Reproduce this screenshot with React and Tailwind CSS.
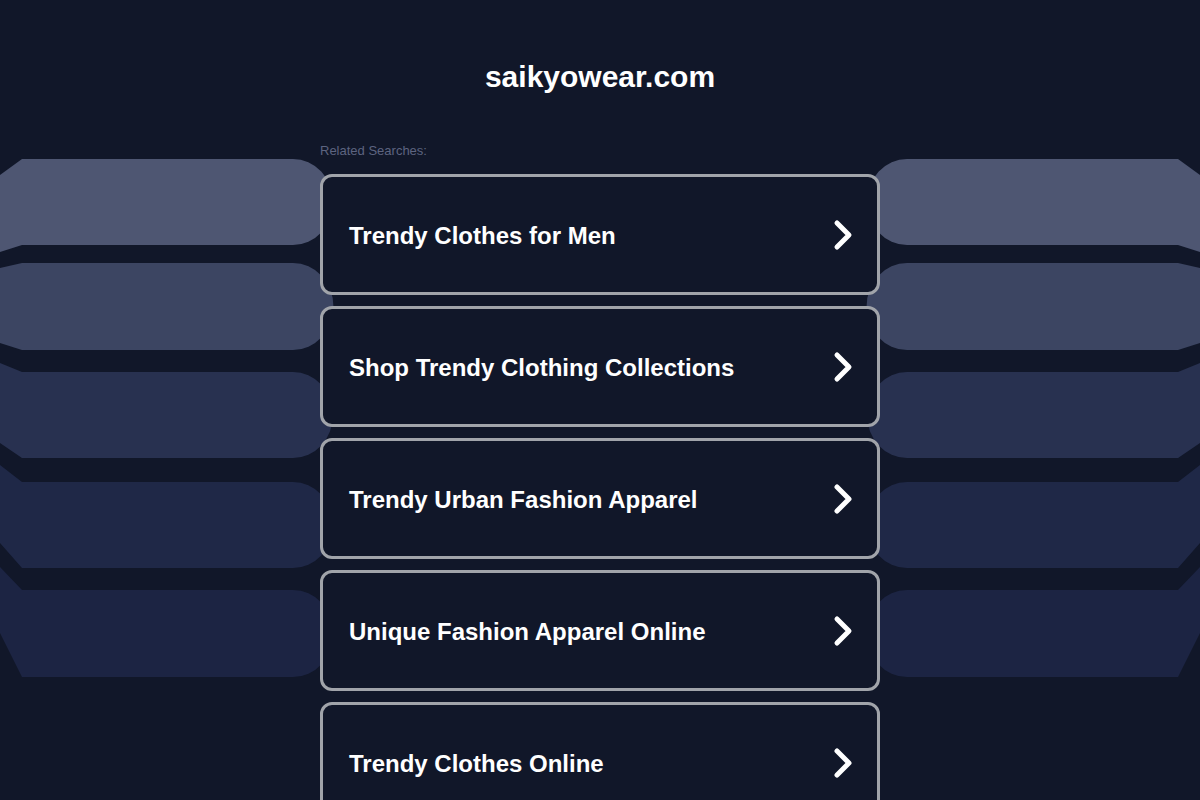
const SEARCHES = [
  'Trendy Clothes for Men',
  'Shop Trendy Clothing Collections',
  'Trendy Urban Fashion Apparel',
  'Unique Fashion Apparel Online',
  'Trendy Clothes Online',
]

// top, bottom, left-edge top, left-edge bottom, fill
const BANDS = [
  [159, 245, 175, 252, '#4e5672'],
  [263, 350, 268, 343, '#3c4562'],
  [372, 458, 363, 443, '#283150'],
  [482, 568, 465, 543, '#1f2847'],
  [590, 677, 567, 633, '#1c2443'],
]

function Backdrop() {
  return (
    <svg className="absolute inset-0 pointer-events-none" width="1200" height="800" viewBox="0 0 1200 800">
      {BANDS.map(([t, b, l0, l1, fill], i) => (
        <g key={i} fill={fill}>
          <path d={`M0,${l0} L22,${t} H293 A40,43 0 0 1 293,${b} H22 L0,${l1} Z`} />
          <path d={`M1200,${l0} L1178,${t} H907 A40,43 0 0 0 907,${b} H1178 L1200,${l1} Z`} />
        </g>
      ))}
    </svg>
  )
}

function Chevron() {
  return (
    <svg width="24" height="32" viewBox="0 0 24 32" className="shrink-0">
      <polyline points="6,4 18,16 6,28" fill="none" stroke="#ffffff" strokeWidth="5" strokeLinecap="round" strokeLinejoin="round" />
    </svg>
  )
}

export default function App() {
  return (
    <div className="relative w-[1200px] h-[800px] overflow-hidden bg-[#111729] font-['Liberation_Sans',Arial,sans-serif]">
      <Backdrop />
      <div className="relative w-[560px] mx-auto pt-[60px]">
        <h1 className="text-center text-white text-[30px] leading-[34px] font-bold">saikyowear.com</h1>
        <p className="mt-[49px] text-[13px] leading-[15px] text-[#5d6480]">Related Searches:</p>
        <div className="mt-[16px] flex flex-col gap-[11px]">
          {SEARCHES.map(s => (
            <a
              key={s}
              href="#"
              className="flex items-center justify-between h-[121px] pl-[26px] pr-[22px] border-[3px] border-[#a1a4aa] rounded-[12px] bg-[#111729]"
            >
              <span className="pt-[2px] text-white text-[24px] font-bold">{s}</span>
              <Chevron />
            </a>
          ))}
        </div>
      </div>
    </div>
  )
}
